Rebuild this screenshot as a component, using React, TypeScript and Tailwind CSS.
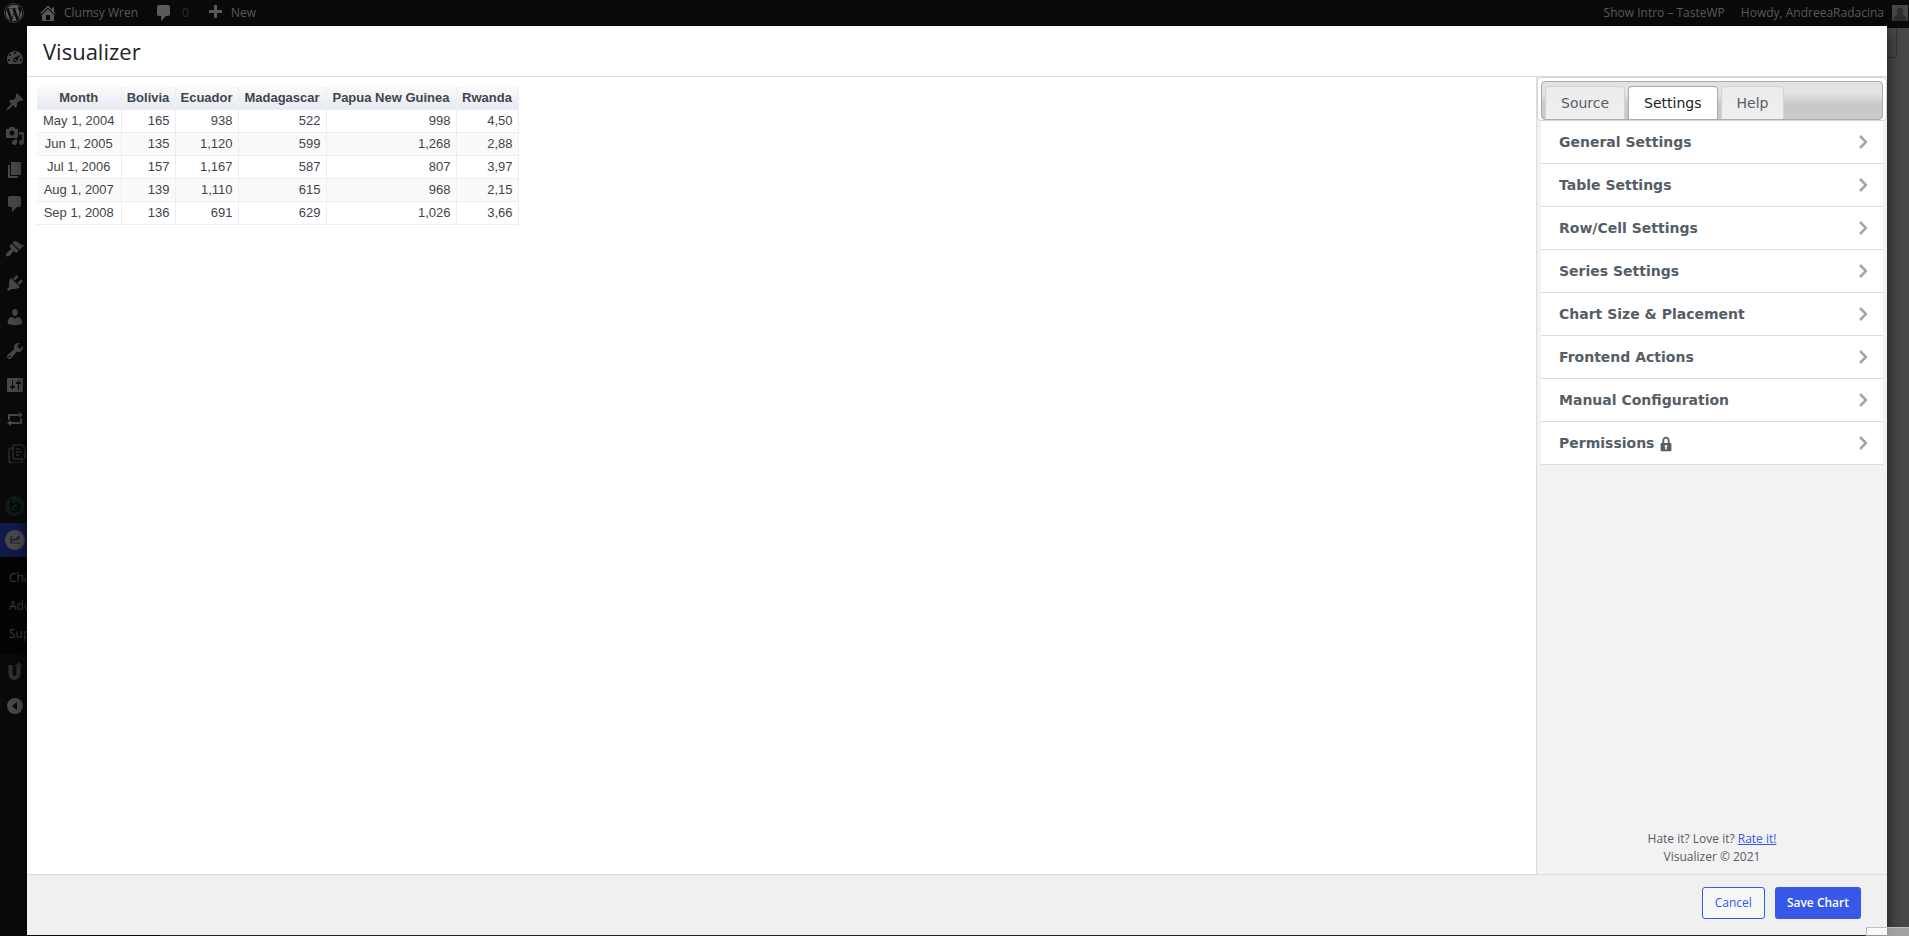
import React from 'react';
import { FaWordpress } from 'react-icons/fa';

const ICONS = {
  home: 'M16 8.5l1.53 1.53-1.06 1.06L10 4.6l-6.47 6.49-1.06-1.06L10 2.5l4 4v-2h2v4zm-6-2.46l6 5.99V18H4v-5.97zM12 17v-5H8v5h4z',
  plus: 'M17 7v3h-5v5H9v-5H4V7h5V2h3v5h5z',
  dashboard:
    'M3.76 17h12.48c1.1-1.37 1.76-3.11 1.76-5 0-4.42-3.58-8-8-8s-8 3.58-8 8c0 1.89.66 3.63 1.76 5zM9 6c0-.55.45-1 1-1s1 .45 1 1c0 .56-.45 1-1 1s-1-.44-1-1zM4 8c0-.55.45-1 1-1s1 .45 1 1c0 .56-.45 1-1 1s-1-.44-1-1zm4.52 3.4c.84-.83 6.51-3.5 6.51-3.5s-2.66 5.68-3.49 6.51c-.84.84-2.18.84-3.02 0-.83-.83-.83-2.18 0-3.01zM3 13c0-.55.45-1 1-1s1 .45 1 1c0 .56-.45 1-1 1s-1-.44-1-1zm6 0c0 .55.45 1 1 1s1-.45 1-1c0-.55-.45-1-1-1s-1 .45-1 1zm6 0c0-.55.45-1 1-1s1 .45 1 1c0 .56-.45 1-1 1s-1-.44-1-1z',
  post: 'M10.44 3.02l1.82-1.82 6.36 6.35-1.83 1.82c-1.05-.68-2.48-.57-3.41.36l-.75.75c-.92.93-1.04 2.35-.35 3.41l-1.83 1.82-2.41-2.41-2.8 2.79c-.42.42-3.38 2.71-3.8 2.29s1.86-3.39 2.28-3.81l2.79-2.79L4.1 9.36l1.83-1.82c1.05.69 2.48.57 3.4-.36l.75-.75c.93-.92 1.05-2.35.36-3.41z',
  media:
    'M13 11V4c0-.55-.45-1-1-1h-1.67L9 1H5L3.67 3H2c-.55 0-1 .45-1 1v7c0 .55.45 1 1 1h10c.55 0 1-.45 1-1zM7 4.5c1.38 0 2.5 1.12 2.5 2.5S8.38 9.5 7 9.5 4.5 8.38 4.5 7 5.62 4.5 7 4.5zM14 6h5v10.5c0 1.38-1.12 2.5-2.5 2.5S14 17.88 14 16.5s1.12-2.5 2.5-2.5c.17 0 .34.02.5.05V9h-3V6zm-4 8.05V13h2v3.5c0 1.38-1.12 2.5-2.5 2.5S7 17.88 7 16.5 8.12 14 9.5 14c.17 0 .34.02.5.05z',
  page: 'M6 15V2h10v13H6zm-1 1h8v2H3V5h2v11z',
  comments:
    'M5 2h9c1.1 0 2 .9 2 2v7c0 1.1-.9 2-2 2h-2l-5 5v-5H5c-1.1 0-2-.9-2-2V4c0-1.1.9-2 2-2z',
  appearance:
    'M14.48 11.06L7.41 3.99l1.5-1.5c.5-.56 2.3-.47 3.51.32 1.21.8 1.43 1.28 2.91 2.1 1.18.64 2.45 1.26 4.45.85zm-.71.71L6.7 4.7 4.93 6.47c-.39.39-.39 1.02 0 1.41l1.06 1.06c.39.39.39 1.03 0 1.42-.6.6-1.43 1.11-2.21 1.69-.35.26-.7.53-1.01.84C1.43 14.23.4 16.08 1.4 17.07c.99 1 2.84-.03 4.18-1.36.31-.31.58-.66.85-1.02.57-.78 1.08-1.61 1.69-2.21.39-.39 1.02-.39 1.41 0l1.06 1.06c.39.39 1.02.39 1.41 0z',
  plugins:
    'M13.11 4.36L9.87 7.6 8 5.73l3.24-3.24c.35-.34 1.05-.2 1.56.32.52.51.66 1.21.31 1.55zm-8 1.77l.91-1.12 9.01 9.01-1.19.84c-.71.71-2.63 1.16-3.82 1.16H6.14L4.9 17.26c-.59.59-1.54.59-2.12 0-.59-.58-.59-1.53 0-2.12l1.24-1.24v-3.88c0-1.13.4-3.19 1.09-3.89zm7.26 3.97l3.24-3.24c.34-.35 1.04-.21 1.55.31.52.51.66 1.21.31 1.55l-3.24 3.25z',
  users:
    'M10 9.25c-2.27 0-2.73-3.44-2.73-3.44C7 4.02 7.82 2 9.97 2c2.16 0 2.98 2.02 2.71 3.81 0 0-.41 3.44-2.68 3.44zm0 2.57L12.72 10c2.39 0 4.52 2.33 4.52 4.53v2.49s-3.65 1.13-7.24 1.13c-3.65 0-7.24-1.13-7.24-1.13v-2.49c0-2.25 1.94-4.48 4.47-4.48z',
  tools:
    'M16.68 9.77c-1.34 1.34-3.3 1.67-4.95.99l-5.41 6.52c-.99.99-2.59.99-3.58 0s-.99-2.59 0-3.57l6.52-5.42c-.68-1.65-.35-3.61.99-4.95 1.28-1.28 3.12-1.62 4.72-1.06l-2.89 2.89 2.82 2.82 2.86-2.87c.53 1.58.18 3.39-1.08 4.65zM3.81 16.21c.4.39 1.04.39 1.43 0 .4-.4.4-1.04 0-1.43-.39-.4-1.03-.4-1.43 0-.39.39-.39 1.03 0 1.43z',
  settings:
    'M18 16V4c0-.55-.45-1-1-1H3c-.55 0-1 .45-1 1v12c0 .55.45 1 1 1h14c.55 0 1-.45 1-1zM8 11h1c.55 0 1 .45 1 1s-.45 1-1 1H8v1.5c0 .28-.22.5-.5.5s-.5-.22-.5-.5V13H6c-.55 0-1-.45-1-1s.45-1 1-1h1V5.5c0-.28.22-.5.5-.5s.5.22.5.5V11zm5-2h-1c-.55 0-1-.45-1-1s.45-1 1-1h1V5.5c0-.28.22-.5.5-.5s.5.22.5.5V7h1c.55 0 1 .45 1 1s-.45 1-1 1h-1v5.5c0 .28-.22.5-.5.5s-.5-.22-.5-.5V9z',
  repeat:
    'M5 7v3l-2 1.5V5h11V3l4 3.01L14 9V7H5zm10 6v-3l2-1.5V15H6v2l-4-3.01L6 11v2h9z',
  lock: 'M14 9h1c.55 0 1 .45 1 1v7c0 .55-.45 1-1 1H5c-.55 0-1-.45-1-1v-7c0-.55.45-1 1-1h1V6c0-2.21 1.79-4 4-4s4 1.79 4 4v3zm-2 0V6c0-1.1-.9-2-2-2s-2 .9-2 2v3h4zm-1 7l-.36-2.15c.51-.24.86-.75.86-1.35 0-.83-.67-1.5-1.5-1.5s-1.5.67-1.5 1.5c0 .6.35 1.11.86 1.35L9 16h2z',
};

type IconName = keyof typeof ICONS;

function Icon({ name, className = 'size-5' }: { name: IconName; className?: string }) {
  return (
    <svg viewBox="0 0 20 20" fill="currentColor" fillRule="evenodd" className={className} aria-hidden="true">
      <path d={ICONS[name]} />
    </svg>
  );
}

const menuGroups: { name: IconName; label: string }[][] = [
  [{ name: 'dashboard', label: 'Dashboard' }],
  [
    { name: 'post', label: 'Posts' },
    { name: 'media', label: 'Media' },
    { name: 'page', label: 'Pages' },
    { name: 'comments', label: 'Comments' },
  ],
  [
    { name: 'appearance', label: 'Appearance' },
    { name: 'plugins', label: 'Plugins' },
    { name: 'users', label: 'Users' },
    { name: 'tools', label: 'Tools' },
    { name: 'settings', label: 'Settings' },
    { name: 'repeat', label: 'Import' },
  ],
];

const columns = [
  { label: 'Month', width: 'w-[84px]' },
  { label: 'Bolivia', width: 'w-[54px]' },
  { label: 'Ecuador', width: 'w-[63px]' },
  { label: 'Madagascar', width: 'w-[88px]' },
  { label: 'Papua New Guinea', width: 'w-[130px]' },
  { label: 'Rwanda', width: 'w-[62px]' },
];

const rows = [
  ['May 1, 2004', '165', '938', '522', '998', '4,50'],
  ['Jun 1, 2005', '135', '1,120', '599', '1,268', '2,88'],
  ['Jul 1, 2006', '157', '1,167', '587', '807', '3,97'],
  ['Aug 1, 2007', '139', '1,110', '615', '968', '2,15'],
  ['Sep 1, 2008', '136', '691', '629', '1,026', '3,66'],
];

const sections = [
  'General Settings',
  'Table Settings',
  'Row/Cell Settings',
  'Series Settings',
  'Chart Size & Placement',
  'Frontend Actions',
  'Manual Configuration',
  'Permissions',
];

function AdminBar() {
  return (
    <header className="flex h-7 items-center justify-between bg-[#0a0a0a] pb-0.5 pl-1 text-[12px] text-[#5a5a5a]">
      <div className="flex items-center">
        <a href="#wp" aria-label="About WordPress">
          <FaWordpress className="size-5" />
        </a>
        <a href="#site" className="ml-3.5 flex items-center gap-1.5">
          <Icon name="home" />
          Clumsy Wren
        </a>
        <a href="#comments" className="ml-4 flex items-center gap-2">
          <Icon name="comments" />
          <span className="text-[#2c2f31]">0</span>
        </a>
        <a href="#new" className="ml-4 flex items-center gap-1.5">
          <Icon name="plus" />
          New
        </a>
      </div>
      <div className="flex items-center">
        <a href="#intro">Show Intro – TasteWP</a>
        <a href="#profile" className="ml-4 flex items-center gap-2">
          Howdy, AndreeaRadacina
          <svg viewBox="0 0 16 16" className="mr-px size-4" aria-hidden="true">
            <path fill="#464646" d="M0 0h16v16H0z" />
            <path fill="#2b2d2e" d="M8 2.500a3.500 4 0 0 1 2 7c3 .8 4.500 2.500 4.500 6.500h-13c0-4 1.500-5.700 4.500-6.500a3.500 4 0 0 1 2-7z" />
          </svg>
        </a>
      </div>
    </header>
  );
}

function MenuLink({ label, children, active }: { label: string; children: React.ReactNode; active?: boolean }) {
  return (
    <a
      href={`#${label.toLowerCase()}`}
      aria-label={label}
      className={`flex h-[34px] items-center pl-[5px] ${active ? 'bg-[#111a4b]' : ''}`}
    >
      {children}
    </a>
  );
}

function AdminMenu() {
  return (
    <nav className="flex w-40 flex-col gap-[11px] bg-[#0a0a0a] pt-3 text-[#484848]">
      {menuGroups.map((group, i) => (
        <div key={i}>
          {group.map((item) => (
            <MenuLink key={item.name} label={item.label}>
              <Icon name={item.name} />
            </MenuLink>
          ))}
          {i === 2 && (
            <MenuLink label="Forms">
              <svg viewBox="0 -2 22 20" fill="none" stroke="#2b2c2d" strokeWidth="1.500" className="ml-0.5 h-5 w-[22px]">
                <path d="M8 0h7l3 3v9a2 2 0 0 1-2 2H8a2 2 0 0 1-2-2V2a2 2 0 0 1 2-2zM5 3H4a2 2 0 0 0-2 2v10a3 3 0 0 0 3 3h8a2 2 0 0 0 2-2v-1M9 4h4M9 7h6M9 10h3M17 9l2 2 3-4" />
              </svg>
            </MenuLink>
          )}
        </div>
      ))}
      <div className="mt-2">
        <MenuLink label="Optimole">
          <svg viewBox="0 0 20 20" className="size-5">
            <circle cx="10" cy="10" r="10" fill="#0d1b1b" />
            <path d="M6 3v13M7 10c2-5 8-3 8 1s-5 6-8 4M9 12c3 1 4-1 3-3" fill="none" stroke="#060909" strokeWidth="2" />
          </svg>
        </MenuLink>
        <MenuLink label="Visualizer" active>
          <svg viewBox="0 0 20 20" className="size-5">
            <circle cx="10" cy="10" r="10" fill="#4a4a4a" />
            <path d="M6 6v7h9" fill="none" stroke="#1c1f2e" strokeWidth="1.200" />
            <path d="M7 11l2-2 2 1 3-3M11.500 7H14v2.500" fill="none" stroke="#141b42" strokeWidth="1.200" />
          </svg>
        </MenuLink>
        <ul className="bg-[#040404] py-[7px] pl-[9px] text-[12px] leading-7 text-[#3c3d3e]">
          <li><a href="#library">Chart Library</a></li>
          <li><a href="#add">Add New Chart</a></li>
          <li><a href="#support">Support</a></li>
        </ul>
        <MenuLink label="Updraft">
          <svg viewBox="0 0 20 20" className="size-5" fill="none" stroke="#2f3234">
            <path d="M5.500 3v8.500c0 6 8 6 8 0V4" strokeWidth="4" />
            <path d="M9 4.500L14 0l4 4.500z" fill="#23282c" stroke="none" />
          </svg>
        </MenuLink>
        <MenuLink label="Collapse menu">
          <svg viewBox="0 0 20 20" className="size-5">
            <circle cx="10" cy="10" r="8" fill="#494949" />
            <path d="M12 6v8l-5-4z" fill="#0a0a0a" />
          </svg>
        </MenuLink>
      </div>
    </nav>
  );
}

function DataTable() {
  return (
    <table className="m-2.5 border-collapse font-['Liberation_Sans',Arial,sans-serif] text-[13px] leading-4 text-[#414549]">
      <thead>
        <tr className="bg-linear-to-b from-[#f9fafb] to-[#e5e9f3]">
          {columns.map((column) => (
            <th
              key={column.label}
              className={`${column.width} border-r border-[#eeeeee] px-1 py-[3px] font-bold whitespace-nowrap`}
            >
              {column.label}
            </th>
          ))}
        </tr>
      </thead>
      <tbody>
        {rows.map((row) => (
          <tr key={row[0]} className="even:bg-[#fafafa]">
            {row.map((cell, i) => (
              <td
                key={columns[i].label}
                className={`border-y border-r border-[#eeeeee] py-[3px] ${i === 0 ? 'px-1 text-center' : 'px-[5px] text-right'}`}
              >
                {cell}
              </td>
            ))}
          </tr>
        ))}
      </tbody>
    </table>
  );
}

function SettingsPanel() {
  const tab = 'h-full rounded-t-[4px] border border-b-0 px-[15px]';
  return (
    <aside className="flex w-[351px] flex-col border-l border-[#dcdcdc] bg-[#f2f2f2] font-['DejaVu_Sans',Verdana,sans-serif] text-[#555d66]">
      <div className="rounded-[4px] border border-[#d5d5d5] bg-white px-[3px] pt-[3px]">
        <div
          role="tablist"
          className="flex h-[39px] gap-[3px] rounded-[4px] border border-[#aaaaaa] bg-linear-to-b from-[#e2e2e2] from-30% to-[#c9c9c9] to-60% px-[3px] pt-1 text-[14px]"
        >
          <button role="tab" className={`${tab} border-[#d3d3d3] bg-linear-to-b from-[#ebebeb] to-[#efefef]`}>
            Source
          </button>
          <button role="tab" aria-selected="true" className={`${tab} border-[#aaaaaa] bg-white text-[#212121]`}>
            Settings
          </button>
          <button role="tab" className={`${tab} border-[#d3d3d3] bg-linear-to-b from-[#ebebeb] to-[#efefef]`}>
            Help
          </button>
        </div>
      </div>
      <ul className="mx-1">
        {sections.map((section) => (
          <li key={section}>
            <button className="flex h-[43px] w-full items-center justify-between border-b border-[#dddddd] bg-white pr-4 pl-[18px] text-[14px] font-bold">
              <span className="flex items-center gap-[3px]">
                {section}
                {section === 'Permissions' && <Icon name="lock" className="mt-0.5 size-[18px]" />}
              </span>
              <svg viewBox="0 0 8 14" className="h-[14px] w-2" fill="none" stroke="#a0a5aa" strokeWidth="2.500" aria-hidden="true">
                <path d="M1 1l6 6-6 6" />
              </svg>
            </button>
          </li>
        ))}
      </ul>
      <p className="mt-auto pb-2 text-center font-['Open_Sans',sans-serif] text-[12px] leading-[18px]">
        Hate it? Love it?{' '}
        <a href="#rate" className="text-[#3858e9] underline">
          Rate it!
        </a>
        <br />
        Visualizer © 2021
      </p>
    </aside>
  );
}

export default function App() {
  return (
    <div className="relative flex h-screen flex-col overflow-hidden bg-[#484848] font-['Open_Sans','Segoe_UI',sans-serif]">
      <AdminBar />
      <div className="flex flex-1 justify-between">
        <AdminMenu />
        {/* Screen options drop-down, dimmed behind the dialog */}
        <div className="mr-3 h-[30px] w-24 rounded-b-[4px] border border-t-0 border-[#353535]" />
      </div>

      {/* Chart dialog */}
      <div
        role="dialog"
        aria-label="Visualizer"
        className="absolute top-[26px] right-[22px] bottom-px left-[27px] flex flex-col bg-white shadow-[0_5px_15px_rgba(0,0,0,0.7)]"
      >
        <h1 className="border-b border-[#dcdcde] px-4 text-[22px] leading-[50px] text-[#1d2327]">Visualizer</h1>
        <main className="flex flex-1 justify-between">
          <div>
            <DataTable />
          </div>
          <SettingsPanel />
        </main>
        <footer className="flex h-[61px] items-start justify-end gap-2.5 border-t border-[#dddddd] bg-[#f0f0f0] pt-3 pr-[26px] text-[12px]">
          <button className="h-8 rounded-[3px] border border-[#3858e9] bg-[#f6f7f7] px-3 text-[#3858e9]">Cancel</button>
          <button className="h-8 rounded-[3px] bg-[#3858e9] px-3 font-semibold text-white">Save Chart</button>
        </footer>
      </div>

      {/* Browser status bubble */}
      <div className="absolute right-0 bottom-0 h-[9px] w-[43px] border-t border-l border-[#bfbfbf] bg-white/50" />
    </div>
  );
}
